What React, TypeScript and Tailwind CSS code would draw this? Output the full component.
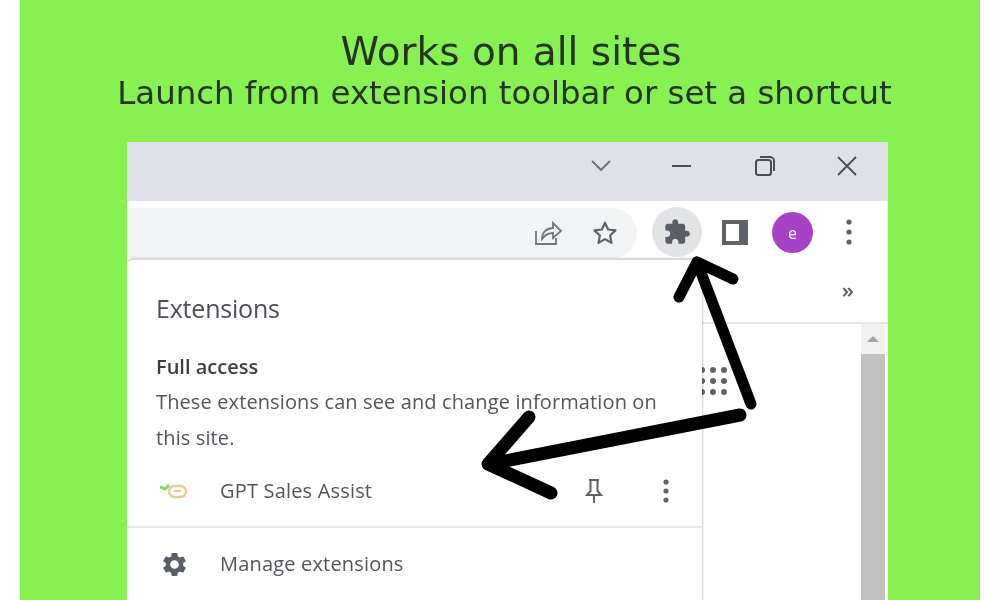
import React from 'react';

const PUZZLE = 'M20.5 11H19V7c0-1.1-.9-2-2-2h-4V3.5C13 2.12 11.88 1 10.5 1S8 2.12 8 3.5V5H4c-1.1 0-1.99.9-1.99 2v3.8H3.5c1.49 0 2.7 1.21 2.7 2.7s-1.21 2.7-2.7 2.7H2V20c0 1.1.9 2 2 2h3.8v-1.5c0-1.49 1.21-2.7 2.7-2.7 1.49 0 2.7 1.21 2.7 2.7V22H17c1.1 0 2-.9 2-2v-4h1.5c1.38 0 2.5-1.12 2.5-2.5S21.88 11 20.5 11z';
const GEAR = 'M19.14 12.94c.04-.3.06-.61.06-.94 0-.32-.02-.64-.07-.94l2.03-1.58c.18-.14.23-.41.12-.61l-1.92-3.32c-.12-.22-.37-.29-.59-.22l-2.39.96c-.5-.38-1.03-.7-1.62-.94l-.36-2.54c-.04-.24-.24-.41-.48-.41h-3.84c-.24 0-.43.17-.47.41l-.36 2.54c-.59.24-1.13.57-1.62.94l-2.39-.96c-.22-.08-.47 0-.59.22L2.74 8.87c-.12.21-.08.47.12.61l2.03 1.58c-.05.3-.09.63-.09.94s.02.64.07.94l-2.03 1.58c-.18.14-.23.41-.12.61l1.92 3.32c.12.22.37.29.59.22l2.39-.96c.5.38 1.03.7 1.62.94l.36 2.54c.05.24.24.41.48.41h3.84c.24 0 .44-.17.47-.41l.36-2.54c.59-.24 1.13-.56 1.62-.94l2.39.96c.22.08.47 0 .59-.22l1.92-3.32c.12-.22.07-.47-.12-.61l-2.01-1.58zM12 15.6c-1.98 0-3.6-1.62-3.6-3.6s1.62-3.6 3.6-3.6 3.6 1.62 3.6 3.6-1.62 3.6-3.6 3.6z';

const Dots = ({ className, gap = 9 }: { className: string; gap?: number }) => (
  <svg width="6" height="26" viewBox="0 0 6 26" className={className} fill="currentColor">
    <circle cx="3" cy={13 - gap} r="2.6" />
    <circle cx="3" cy="13" r="2.6" />
    <circle cx="3" cy={13 + gap} r="2.6" />
  </svg>
);

const App: React.FC = () => {
  return (
    <div className="w-[1000px] h-[600px] overflow-hidden bg-white px-[20px]">
      <div className="relative h-[600px] bg-[#88f152] flex flex-col">
        {/* Heading */}
        <div className="h-[142px] pt-[29px] text-center text-[#263322] font-['DejaVu_Sans',sans-serif] blur-[0.5px]">
          <div className="pl-[22px] text-[39px] leading-[46px]">Works on all sites</div>
          <div className="pl-[9px] text-[32.4px] leading-[40px] -mt-[2px] whitespace-nowrap">Launch from extension toolbar or set a shortcut</div>
        </div>

        {/* Browser window */}
        <div className="ml-[107px] w-[761px] flex-1 bg-white flex flex-col overflow-hidden font-['Open_Sans',sans-serif] blur-[0.5px]">
          {/* Title bar */}
          <div className="h-[59px] shrink-0 bg-[#dee1e6] flex items-center justify-end pb-[11px] text-[#4a4d52]">
            <svg width="24" height="16" viewBox="0 0 24 16" className="mr-[58px] text-[#6a6d72]" fill="none" stroke="currentColor" strokeWidth="1.8">
              <path d="M3 3l9 9 9-9" />
            </svg>
            <svg width="22" height="4" viewBox="0 0 22 4" className="mr-[61px]" fill="none" stroke="currentColor" strokeWidth="2">
              <path d="M1 2h19" />
            </svg>
            <svg width="22" height="22" viewBox="0 0 22 22" className="mr-[60px]" fill="none" stroke="currentColor" strokeWidth="2">
              <rect x="2" y="5" width="15" height="15" rx="2.5" />
              <path d="M6 2h10a4 4 0 0 1 4 4v10" />
            </svg>
            <svg width="22" height="22" viewBox="0 0 22 22" className="mr-[30px]" fill="none" stroke="currentColor" strokeWidth="1.8">
              <path d="M2 2l18 18M20 2L2 20" />
            </svg>
          </div>

          {/* Toolbar */}
          <div className="h-[57px] shrink-0 bg-white flex items-start">
            <div className="mt-[7px] h-[50px] w-[510px] bg-[#f1f3f4] rounded-r-[25px] flex items-center justify-end pr-[19px] gap-[29px] text-[#72767b]">
              <svg width="30" height="26" viewBox="0 0 30 26" fill="none" stroke="currentColor" strokeWidth="1.8">
                <path d="M3 11v13h20v-6" />
                <path d="M9 19c0-7 5-11 11-11V3l8 8-8 7v-5c-4 0-8 2-11 6z" />
              </svg>
              <svg width="26" height="26" viewBox="0 0 24 24" fill="none" stroke="#5f6368" strokeWidth="2" strokeLinejoin="round">
                <path d="M12 2.500l2.900 6.300 6.800.8-5 4.700 1.300 6.800-6-3.400-6 3.400 1.300-6.800-5-4.700 6.800-.8z" />
              </svg>
            </div>
            <div className="ml-[15px] mt-[6px] w-[50px] h-[50px] rounded-full bg-[#e2e3e4] flex items-center justify-center text-[#5a5e66]">
              <svg width="28" height="28" viewBox="0 0 24 24" fill="currentColor"><path d={PUZZLE} /></svg>
            </div>
            <div className="ml-[20px] mt-[19px] w-[26px] h-[25px] border-[4px] border-[#5f6368] border-r-[9px] bg-white" />
            <div className="ml-[24px] mt-[11px] w-[41px] h-[41px] rounded-full bg-[#a742c4] flex items-center justify-center text-white text-[16px] leading-none">e</div>
            <Dots gap={10} className="ml-[33px] mt-[18px] text-[#5f6368]" />
          </div>

          {/* Popup and the page behind it */}
          <div className="flex-1 flex min-h-0">
            <div className="relative z-10 w-[575px] shrink-0 rounded-t-[6px] border-t-2 border-[#d9dadc] bg-white shadow-[1px_0_2px_rgba(0,0,0,0.2)] flex flex-col text-[#51555c]">
              <div className="pl-[29px] pt-[31px] text-[25px] leading-[34px] tracking-[-0.2px] text-[#4b4f57]">Extensions</div>
              <div className="pl-[29px] pt-[28px] text-[20px] leading-[28px] font-semibold text-[#3d4047]">Full access</div>
              <div className="pl-[29px] pt-[3px] pr-[40px] text-[20px] leading-[36px] tracking-[0.12px]">
                These extensions can see and change information on this site.
              </div>
              <div className="h-[72px] shrink-0 flex items-center pl-[33px] pr-[33px] border-b-2 border-[#e6e7e9]">
                <svg width="28" height="16" viewBox="0 0 28 16" fill="none">
                  <rect x="9" y="3" width="17" height="11" rx="5.5" stroke="#eac99a" strokeWidth="2.500" />
                  <path d="M0 4l5 2 4-4" stroke="#7fdc55" strokeWidth="3" />
                  <path d="M14 8h7" stroke="#e0b070" strokeWidth="1.500" />
                </svg>
                <span className="ml-[32px] flex-1 text-[20px] leading-[28px] tracking-[0.18px]">GPT Sales Assist</span>
                <svg width="20" height="26" viewBox="0 0 20 26" className="text-[#5f6368]" fill="none" stroke="currentColor" strokeWidth="2">
                  <path d="M5 2h10M6.500 2v11L3 17h14l-3.500-4V2M10 17v8" />
                </svg>
                <Dots className="ml-[59px] text-[#5f6368]" />
              </div>
              <div className="flex items-center pl-[33px] pt-[18px]">
                <svg width="29" height="29" viewBox="0 0 24 24" fill="#5a5e66"><path d={GEAR} /></svg>
                <span className="ml-[31px] text-[20px] leading-[36px] tracking-[0.18px]">Manage extensions</span>
              </div>
            </div>

            {/* Page behind */}
            <div className="flex-1 flex flex-col min-w-0">
              <div className="h-[66px] shrink-0 border-b-2 border-[#e3e4e6] flex items-center justify-end pr-[34px] pb-[2px] text-[#5f6368] text-[22px] font-semibold">»</div>
              <div className="flex-1 flex justify-between pr-[3px]">
                <div className="pt-[43px] grid grid-cols-3 gap-x-[5px] gap-y-[5px] h-fit -ml-[3px]">
                  {Array.from({ length: 9 }).map((_, i) => (
                    <span key={i} className="w-[6px] h-[6px] rounded-full bg-[#5f6368]" />
                  ))}
                </div>
                <div className="w-[24px] bg-[#f1f1f1] flex flex-col">
                  <div className="h-[30px] shrink-0 flex items-center justify-center">
                    <div className="w-0 h-0 border-x-[6px] border-x-transparent border-b-[6px] border-b-[#a3a3a3]" />
                  </div>
                  <div className="flex-1 bg-[#c0c0c0]" />
                </div>
              </div>
            </div>
          </div>
        </div>

        {/* Hand drawn arrows over the window */}
        <svg className="absolute left-[-20px] top-0 pointer-events-none" width="1000" height="600" viewBox="0 0 1000 600" fill="none" stroke="#000" strokeWidth="11" strokeLinecap="round" strokeLinejoin="round">
          <path d="M751 404L697 262" />
          <path d="M679 297L697 262L733 279" />
          <path d="M740 415L490 464" strokeWidth="13" />
          <path d="M529 417L488 464L551 493" strokeWidth="13" />
        </svg>
      </div>
    </div>
  );
};

export default App;
